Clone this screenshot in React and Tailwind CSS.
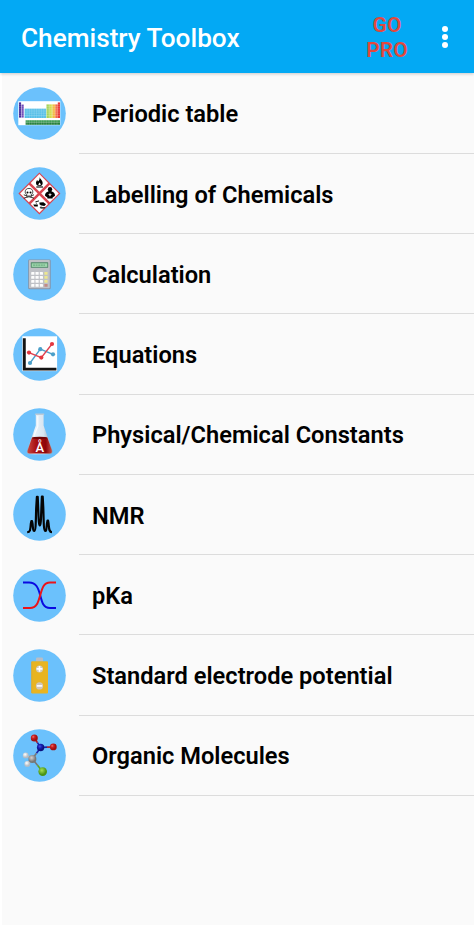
import React from 'react';

const PeriodicTableIcon = () => (
  <>
    <rect x="5.3" y="14.2" width="42" height="24" fill="#fff" />
    <rect x="6" y="15.4" width="2.1" height="15.2" fill="#4a2d9c" />
    <rect x="8.5" y="17.5" width="2.2" height="13.1" fill="#6f4bb8" />
    <rect x="11.6" y="21.6" width="21.6" height="9.4" fill="#55bfe8" />
    <rect x="33.4" y="17.3" width="3.4" height="13.7" fill="#a5d45a" />
    <rect x="36.8" y="17.3" width="2.8" height="13.7" fill="#d5dc4a" />
    <rect x="39.6" y="17.3" width="2.8" height="13.7" fill="#f4b53c" />
    <rect x="42.4" y="17.3" width="2.4" height="13.7" fill="#f2603c" />
    <rect x="44.8" y="15.4" width="2.2" height="15.6" fill="#e8383a" />
    <rect x="12.6" y="33.2" width="34.4" height="2.2" fill="#3f9d57" />
    <rect x="12.6" y="35.4" width="34.4" height="2.4" fill="#257f3d" />
    <g stroke="#fff" strokeWidth="0.35" opacity="0.5">
      <path d="M6 17.4H47M6 19.6H47M6 21.8H47M6 24H47M6 26.2H47M6 28.5H47" />
      <path d="M14 21v17M16.4 21v17M18.8 21v17M21.2 21v17M23.6 21v17M26 21v17M28.4 21v17M30.8 21v17M33.3 17v21M36 17v21M38.6 17v21M41.2 17v21M44 17v21" />
    </g>
  </>
);

const HazardIcon = () => (
  <>
    <path d="M26.4 5.4 47.4 26.4 26.4 47.4 5.4 26.4Z" fill="#d94550" />
    <g fill="#fff">
      <path d="M26.4 7.1 35.1 15.9 26.4 24.7 17.7 15.9Z" />
      <path d="M15.9 17.7 24.7 26.4 15.9 35.2 7.1 26.4Z" />
      <path d="M36.9 17.7 45.7 26.4 36.9 35.2 28.2 26.4Z" />
      <path d="M26.4 28.2 35.1 36.9 26.4 45.7 17.7 36.9Z" />
    </g>
    {/* flame */}
    <path d="M26.6 10.2C27.4 12.3 29.8 13.5 29.7 16C29.7 18 28.5 19.1 26.6 19.1C24.5 19.1 22.9 17.9 23 15.8C23.1 14.5 23.8 13.8 24.1 13C24.6 13.5 24.8 14 24.9 14.6C26.2 13.4 26.8 12 26.6 10.2Z" fill="#000" />
    <path d="M26.5 15.4C27.6 16.5 28 17.2 27.5 18.3H25.5C25.1 17.2 25.9 16.5 26.5 15.4Z" fill="#fff" />
    <path d="M23.3 20H30" stroke="#000" strokeWidth="1.1" />
    {/* skull */}
    <path d="M10.8 27.8 21 31.2M21 27.8 10.8 31.2" stroke="#000" strokeWidth="0.8" />
    <path d="M12.2 24.9C12.2 22.5 13.8 21.4 16 21.4C18.3 21.4 19.8 22.7 19.8 24.9C19.8 26.3 19.1 27.2 18.2 27.6V29.8H13.9V27.6C12.9 27.2 12.2 26.2 12.2 24.9Z" fill="#fff" stroke="#000" strokeWidth="0.7" />
    <circle cx="14.5" cy="25.4" r="1" fill="#000" />
    <circle cx="17.5" cy="25.4" r="1" fill="#000" />
    <path d="M15.2 28v1.6M16.8 28v1.6" stroke="#000" strokeWidth="0.5" />
    {/* health hazard */}
    <circle cx="37" cy="22.2" r="2.2" fill="#000" />
    <path d="M32 28.8C32 26.4 33.2 25.2 35.4 24.6V23.8H38.6V24.6C40.8 25.2 42 26.4 42 28.8L39.6 30.4V31.6H34.4V30.4Z" fill="#000" />
    <path d="M37 25.6 37.5 27.2 39 27.6 37.6 28.3 37 29.8 36.4 28.3 35 27.6 36.5 27.2Z" fill="#fff" />
    {/* corrosion */}
    <path d="M20.2 37.4H24.8V39.4H21.4ZM26.6 40.2H32.4L31.2 41.6H27.6Z" fill="#000" />
    <path d="M22.4 34.9 26 33.9" stroke="#000" strokeWidth="0.9" />
    <path d="M26.4 35.4 30.4 35.2 33 37.2 31.4 39 28.6 38.6 26.6 37.4Z" fill="#000" />
    <path d="M23.4 35.6v1.4M28 38.6v1.4" stroke="#000" strokeWidth="0.5" />
  </>
);

const CalculatorIcon = () => (
  <>
    <rect x="15.2" y="11.4" width="22.5" height="29.9" rx="1.3" fill="#8793a6" />
    <rect x="16" y="11.9" width="20.8" height="28.4" rx="0.8" fill="#bfc1c6" />
    <rect x="17.8" y="14.2" width="17.4" height="5.6" rx="0.5" fill="#4f8768" />
    <rect x="18.7" y="15.3" width="15.6" height="3.6" fill="#9ed6ac" />
    <path d="M20 17.1H32" stroke="#6fae84" strokeWidth="1.4" strokeDasharray="2 .6" />
    {[24, 28, 32, 36].map((y, i) => (
      <g key={y}>
        {[18.2, 22.5, 26.8].map((x) => (
          <rect key={x} x={x} y={y} width="3.2" height="2.8" rx="0.4" fill="#fdfdfd" />
        ))}
        <rect x="31.4" y={y} width="3.2" height="2.8" rx="0.4" fill={i === 3 ? '#c28a85' : '#ece68f'} />
      </g>
    ))}
  </>
);

const ChartIcon = () => (
  <>
    <rect x="9.3" y="8.3" width="34.8" height="34.8" fill="#fff" />
    <path d="M11.3 10.2V41.1H43.4" fill="none" stroke="#151515" strokeWidth="2.9" />
    <path d="M17 35 27.3 21.2 40 26.3" fill="none" stroke="#4a9fc9" strokeWidth="1.4" />
    <path d="M16 24.6 28.3 29.6 39 16" fill="none" stroke="#e0404f" strokeWidth="1.4" />
    <g fill="#4a9fc9">
      <circle cx="17" cy="35" r="2.1" />
      <circle cx="27.3" cy="21.2" r="2.1" />
      <circle cx="40" cy="26.3" r="2.1" />
    </g>
    <g fill="#e4373f">
      <circle cx="16" cy="24.6" r="2.1" />
      <circle cx="28.3" cy="29.6" r="2.1" />
      <circle cx="39" cy="16" r="2.1" />
    </g>
  </>
);

const FlaskIcon = () => (
  <>
    <defs>
      <linearGradient id="glass" x1="0" x2="1">
        <stop offset="0" stopColor="#8fa3b5" />
        <stop offset="0.3" stopColor="#e9f2fa" />
        <stop offset="0.65" stopColor="#d8e5f0" />
        <stop offset="1" stopColor="#8699ab" />
      </linearGradient>
      <linearGradient id="liquid" x1="0" x2="1">
        <stop offset="0" stopColor="#c9473f" />
        <stop offset="0.35" stopColor="#a80f12" />
        <stop offset="0.75" stopColor="#8e0609" />
        <stop offset="1" stopColor="#c4504a" />
      </linearGradient>
    </defs>
    <path d="M22.8 6.5H30.6V17.5L39.2 42C40 44.7 39 46.2 36.5 46.2H16.8C14.2 46.2 13.3 44.7 14.2 42L22.8 17.5Z" fill="url(#glass)" />
    <path d="M19 29.6C22 28.7 31.2 28.7 34.4 29.6L38.7 42C39.4 44.3 38.5 45.6 36.4 45.6H16.9C14.8 45.6 14 44.3 14.8 42Z" fill="url(#liquid)" />
    <ellipse cx="26.7" cy="29.9" rx="7.6" ry="1.2" fill="#6d0507" />
    <path d="M24.8 8V18.5L20.6 28.5" fill="none" stroke="#fff" strokeWidth="1.2" opacity="0.8" />
    <rect x="22" y="5.4" width="9.3" height="1.6" rx="0.8" fill="#bccad6" />
    <text x="26.8" y="43.8" textAnchor="middle" fontFamily="Roboto, sans-serif" fontSize="13" fontWeight="500" fill="#fff">Å</text>
  </>
);

const NmrIcon = () => (
  <path
    d="M14.2 44.2C17.4 44.2 17.4 41 17.8 36L18.4 33H19L19.6 36C20 41 20.2 43 21.2 43C22.9 43 22.8 32 23.2 20L23.9 8.9H24.7L25.2 20C25.6 31 25.8 37.5 26.8 37.5C27.8 37.5 28 31 28.4 20L28.9 8.5H29.7L30.3 20C30.7 32 30.6 43 32.3 43C33.3 43 33.4 41 33.9 36L34.5 32.6H35.1L35.6 36C36.1 41 36.1 44.2 39 44.2"
    fill="none"
    stroke="#050505"
    strokeWidth="2.2"
    strokeLinejoin="round"
  />
);

const PkaIcon = () => (
  <g fill="none" strokeWidth="2">
    <path d="M10 13.6H16C23 13.6 25.2 18.5 27.2 26.2C29.2 34 30.5 39 37 39H43" stroke="#0a0ae0" />
    <path d="M10 39H17C23.5 39 25 34 27.2 26.2C29.4 18.5 30.8 13.6 37 13.6H43" stroke="#ec1218" />
  </g>
);

const BatteryIcon = () => (
  <>
    <rect x="23" y="8.6" width="7" height="4" rx="1.2" fill="#b9bdc4" />
    <rect x="18.3" y="12.3" width="16.7" height="32.3" rx="1" fill="#e8b420" />
    <path d="M18.7 12.8V44" stroke="#d2a83c" strokeWidth="0.8" />
    <circle cx="26.5" cy="19.9" r="3.5" fill="#d3cbbb" />
    <path d="M26.5 17V22.8M23.6 19.9H29.4" stroke="#fff" strokeWidth="1.6" />
    <circle cx="26.5" cy="36.9" r="3.6" fill="#cfc5b6" />
    <path d="M23.8 36.9H29.2" stroke="#fff" strokeWidth="1.6" />
  </>
);

const MoleculeIcon = () => (
  <>
    <defs>
      <radialGradient id="red" cx="0.35" cy="0.35">
        <stop offset="0" stopColor="#f0716c" />
        <stop offset="0.45" stopColor="#c92122" />
        <stop offset="1" stopColor="#a01012" />
      </radialGradient>
      <radialGradient id="blue" cx="0.4" cy="0.35">
        <stop offset="0" stopColor="#4a55e0" />
        <stop offset="0.5" stopColor="#1620b8" />
        <stop offset="1" stopColor="#0b117e" />
      </radialGradient>
      <radialGradient id="gray" cx="0.4" cy="0.35">
        <stop offset="0" stopColor="#d2d2d2" />
        <stop offset="1" stopColor="#777" />
      </radialGradient>
      <radialGradient id="white" cx="0.4" cy="0.35">
        <stop offset="0" stopColor="#fff" />
        <stop offset="1" stopColor="#b5bcc4" />
      </radialGradient>
      <radialGradient id="green" cx="0.4" cy="0.35">
        <stop offset="0" stopColor="#a6e052" />
        <stop offset="1" stopColor="#4a9414" />
      </radialGradient>
    </defs>
    <g strokeWidth="1.6">
      <path d="M21.3 9 24.5 13.7" stroke="#b01a20" />
      <path d="M24.5 13.7 27.7 18.5 34 18.1" stroke="#1c22a8" fill="none" />
      <path d="M34 18.1H40" stroke="#b01a20" />
      <path d="M27.7 18.5 23.5 24.2" stroke="#1c22a8" />
      <path d="M23.5 24.2 19.4 29.8 24.5 36.3" stroke="#777" fill="none" />
      <path d="M24.5 36.3 29.7 42.8" stroke="#5ea322" />
      <path d="M12.7 26 19.4 29.8 14.3 34.8" stroke="#b5b9bd" fill="none" />
    </g>
    <circle cx="21.3" cy="8.9" r="3.5" fill="url(#red)" />
    <circle cx="40.3" cy="17.9" r="3.4" fill="url(#red)" />
    <circle cx="27.6" cy="18.5" r="3.7" fill="url(#blue)" />
    <circle cx="12.7" cy="26.4" r="2.9" fill="url(#white)" />
    <circle cx="19.4" cy="30" r="4" fill="url(#gray)" />
    <circle cx="14.3" cy="34.9" r="2.9" fill="url(#white)" />
    <circle cx="29.7" cy="42.6" r="4.3" fill="url(#green)" />
  </>
);

const items = [
  { title: 'Periodic table', Icon: PeriodicTableIcon },
  { title: 'Labelling of Chemicals', Icon: HazardIcon },
  { title: 'Calculation', Icon: CalculatorIcon },
  { title: 'Equations', Icon: ChartIcon },
  { title: 'Physical/Chemical Constants', Icon: FlaskIcon },
  { title: 'NMR', Icon: NmrIcon },
  { title: 'pKa', Icon: PkaIcon },
  { title: 'Standard electrode potential', Icon: BatteryIcon },
  { title: 'Organic Molecules', Icon: MoleculeIcon },
];

const Header = () => (
  <header className="relative flex h-[73px] items-center bg-[#03a9f4] pl-[21px] pr-[26px] shadow-[0_1px_3px_rgba(0,0,0,0.2)]">
    <h1 className="flex-1 pt-0.5 text-[26.2px] font-medium leading-8 text-white">Chemistry Toolbox</h1>
    <button type="button" className="mr-[25px] w-[60px] pt-[3px] text-center text-[21px] font-semibold leading-[25px] text-[#e2483d]">
      GO
      <br />
      PRO
    </button>
    <button type="button" aria-label="More options" className="flex flex-col gap-[2px]">
      <span className="size-[6px] rounded-full bg-white" />
      <span className="size-[6px] rounded-full bg-white" />
      <span className="size-[6px] rounded-full bg-white" />
    </button>
  </header>
);

const ListItem = ({ title, Icon }) => (
  <li className="flex h-[80.25px] pl-[11px]">
    <svg viewBox="0 0 53 53" className="mr-[13px] size-[53px] shrink-0 self-center">
      <circle cx="26.5" cy="26.5" r="26.3" fill="#6bc1fc" />
      <Icon />
    </svg>
    <div className="flex flex-1 items-center border-b border-[#dcdcdc] pl-[13px] pt-1">
      <span className="whitespace-nowrap text-[23.65px] font-semibold text-black">{title}</span>
    </div>
  </li>
);

const App = () => (
  <div className="flex min-h-screen flex-col bg-white font-['Roboto',sans-serif]">
    <Header />
    <ul className="mb-[3px] ml-[2px] flex-1 bg-[#fafafa] pt-[0.6px]">
      {items.map((item) => (
        <ListItem key={item.title} title={item.title} Icon={item.Icon} />
      ))}
    </ul>
  </div>
);

export default App;
